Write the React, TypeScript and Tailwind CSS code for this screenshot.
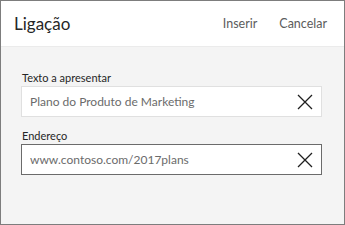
import React from 'react';

function ClearIcon() {
  return (
    <svg width="16" height="16" viewBox="0 0 16 16" className="shrink-0">
      <path d="M1 1 L15 15 M15 1 L1 15" stroke="#1f1f1f" strokeWidth="1.3" fill="none" />
    </svg>
  );
}

function Field({ label, value, focused }: { label: string; value: string; focused?: boolean }) {
  return (
    <div className="flex flex-col">
      <div className="text-[11px] leading-[14px] text-[#262626] mb-[1px] pl-[1px]">{label}</div>
      <div
        className={
          'h-[31px] bg-white flex items-center pl-[8px] pr-[8px] ' +
          (focused ? 'border border-[#6b6b6b]' : 'border border-[#e0e0e0]')
        }
      >
        <span className="flex-1 text-[12px] text-[#6b6b6b] truncate">{value}</span>
        <ClearIcon />
      </div>
    </div>
  );
}

export default function App() {
  return (
    <div
      className="w-[345px] h-[225px] border border-[#7d7d7d] bg-[#f4f4f4] flex flex-col overflow-hidden"
      style={{ fontFamily: 'Lato, "Open Sans", sans-serif' }}
    >
      <div className="h-[46px] bg-white border-b border-[#ebebeb] flex items-center pl-[13px] pr-[17px]">
        <h1 className="text-[17px] text-[#262626] flex-1 mt-[1px]">Ligação</h1>
        <div className="flex items-center gap-[22px] text-[12.5px] text-[#5c5c5c] mt-[1px]">
          <span>Inserir</span>
          <span>Cancelar</span>
        </div>
      </div>
      <div className="flex flex-col gap-[12px] pl-[20px] pr-[22px] pt-[24px]">
        <Field label="Texto a apresentar" value="Plano do Produto de Marketing" />
        <Field label="Endereço" value="www.contoso.com/2017plans" focused />
      </div>
    </div>
  );
}
